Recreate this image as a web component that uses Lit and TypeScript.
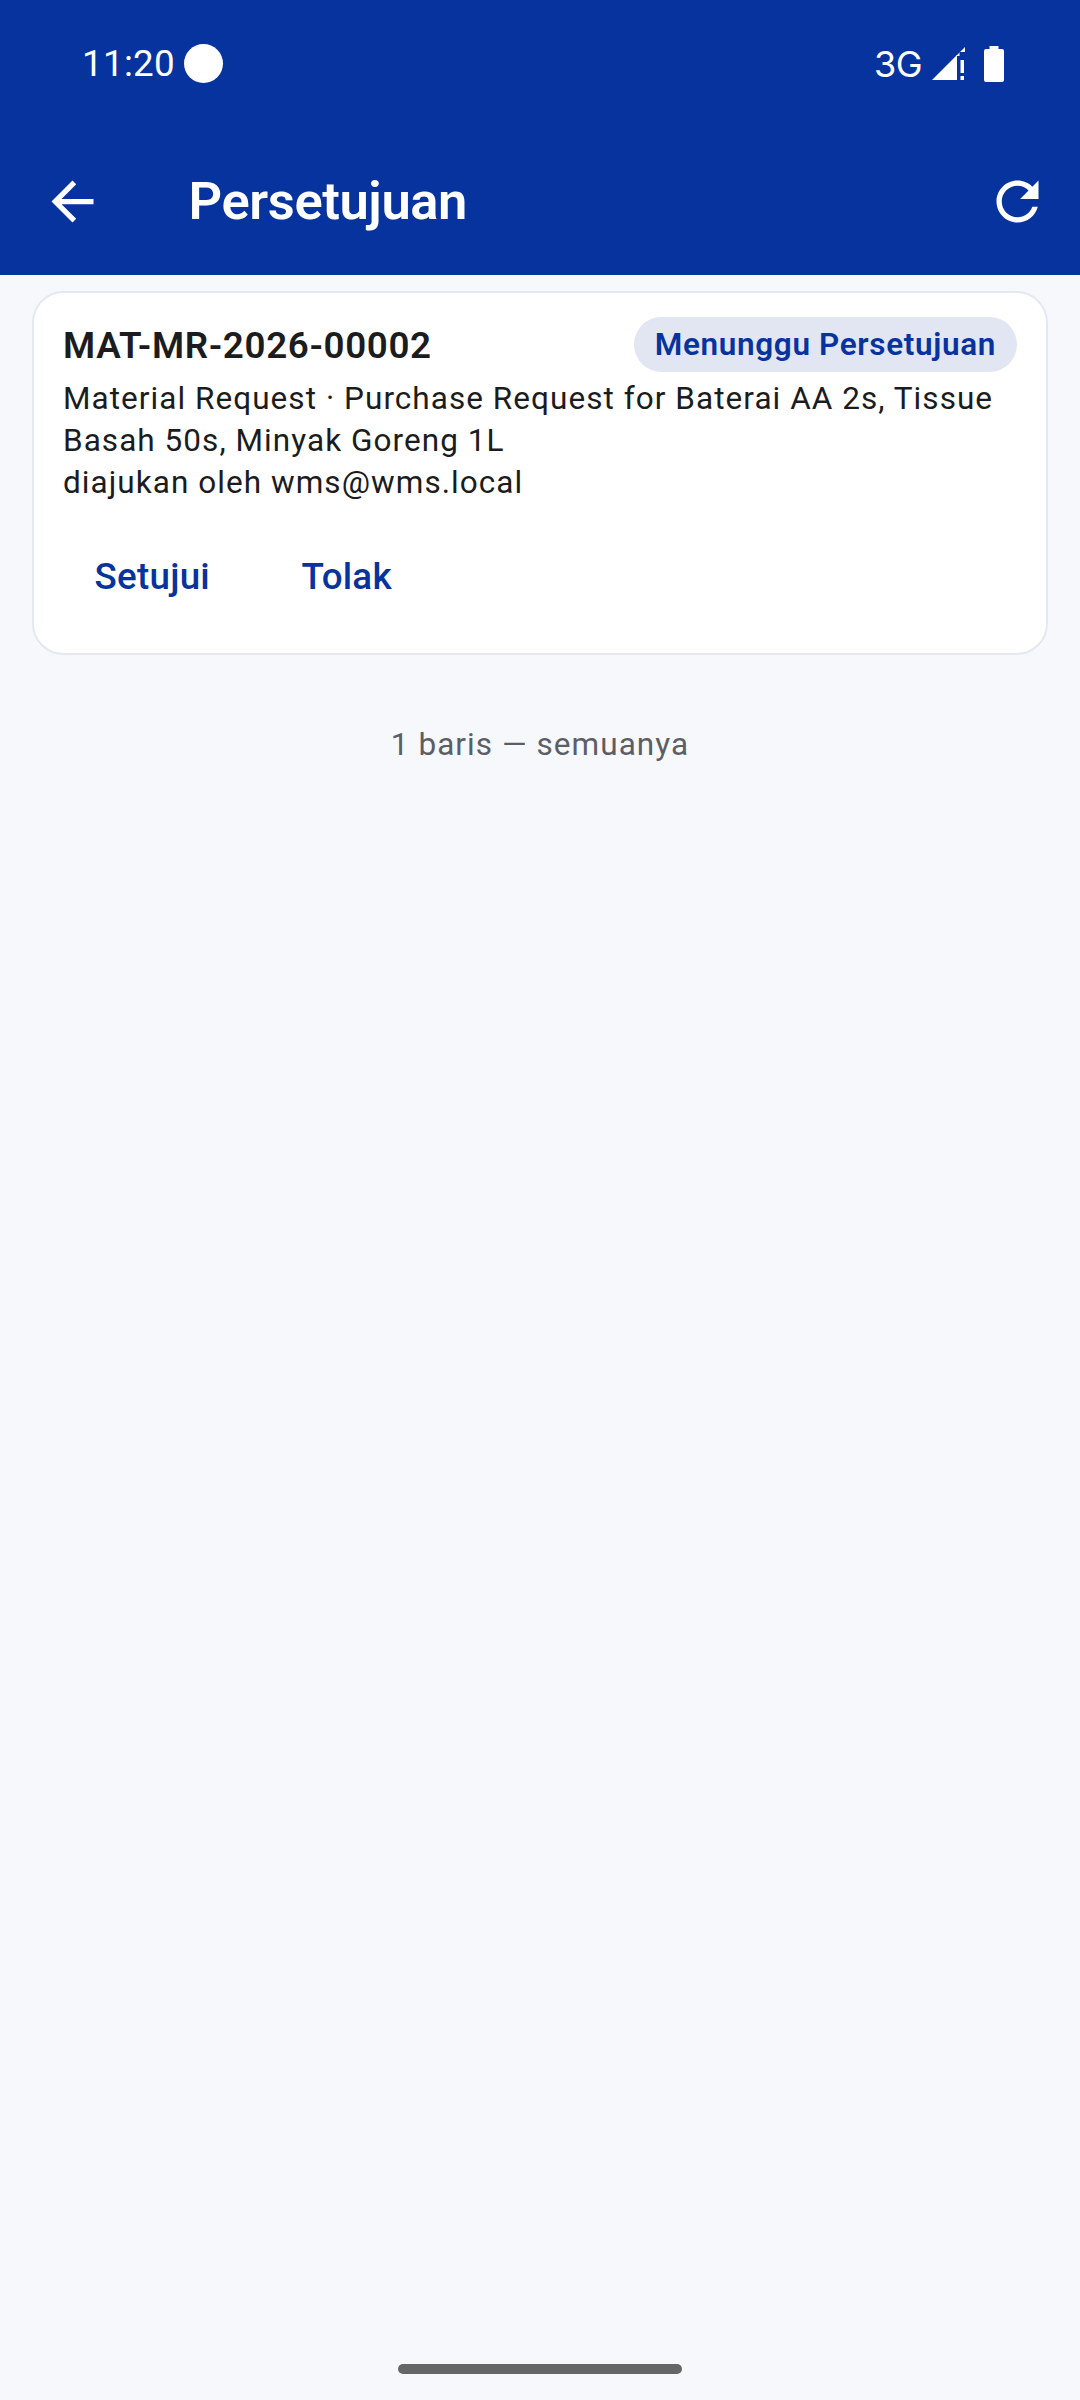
import { LitElement, html, css } from "lit";
import { customElement } from "lit/decorators.js";

@customElement("app-root")
export class AppRoot extends LitElement {
  static styles = css`
    :host {
      display: flex;
      flex-direction: column;
      width: 1080px;
      height: 2400px;
      background: #f7f8fc;
      font-family: Roboto, "Liberation Sans", sans-serif;
      color: #1a1c20;
      overflow: hidden;
    }
    .top { background: #07339f; color: #fff; height: 275px; display: flex; flex-direction: column; flex: none; }
    .status { height: 105px; display: flex; align-items: center; box-sizing: border-box; padding: 42px 74.6px 20px 82px; justify-content: space-between; flex: none; }
    .left, .right { display: flex; align-items: center; }
    .time { font-size: 36.75px; letter-spacing: 0.3px; line-height: 42px; }
    .dot { width: 39px; height: 39px; border-radius: 50%; background: #fff; margin-left: 9px; }
    .net { font-size: 36px; line-height: 42px; margin-right: 10px; font-family: Inter, Roboto, sans-serif; letter-spacing: -0.3px; }
    .sig { width: 33px; height: 33px; display: block; }
    .bat { width: 22px; height: 36px; display: block; margin-left: 18px; }
    .bar { flex: 1; display: flex; align-items: center; padding: 0 31.5px 0 40.5px; margin-top: 23px; }
    .icon { width: 63px; height: 63px; display: block; fill: #fff; flex: none; }
    .title { flex: 1; font-size: 52.5px; line-height: 73.5px; font-weight: 600; margin-left: 85px; letter-spacing: -0.4px; }
    .card {
      margin: 16px 32px 0;
      background: #fff;
      border: 2.6px solid #e3e8f2;
      border-radius: 31.5px;
      padding: 24px 29px 0;
      box-sizing: border-box;
      height: 364px;
    }
    .head { display: flex; align-items: center; justify-content: space-between; }
    .id { font-size: 36.75px; line-height: 52.5px; font-weight: 600; letter-spacing: 0.65px; margin-top: 3px; }
    .badge {
      background: #e1e6f2;
      color: #07339f;
      border-radius: 28px;
      padding: 6.5px 21px;
      font-size: 31.5px;
      line-height: 42px;
      font-weight: 600;
      letter-spacing: 0.65px;
    }
    .body { font-size: 31.5px; line-height: 42px; letter-spacing: 1.05px; margin-top: 5px; }
    .actions { display: flex; gap: 28.5px; margin-top: 26.5px; }
    .btn { color: #07339f; font-size: 36.75px; line-height: 52.5px; font-weight: 500; padding: 21px 31.5px; letter-spacing: 0.26px; }
    .foot { text-align: center; font-size: 31.5px; line-height: 42px; letter-spacing: 1.05px; color: #5c5e66; margin-top: 69px; }
    .spacer { flex: 1; }
    .home { width: 284px; height: 10px; border-radius: 5px; background: #666; margin: 0 auto 26px; flex: none; }
  `;

  render() {
    return html`
      <div class="top">
        <div class="status">
          <div class="left"><span class="time">11:20</span><span class="dot"></span></div>
          <div class="right">
            <span class="net">3G</span>
            <svg class="sig" viewBox="0 0 33 33" fill="#fff">
              <path d="M0 33 L25 8 V33 Z" />
              <path d="M24 9 L33 0 V5 H27.5 V9 Z" />
              <path d="M28.5 13 H32 V26 H28.5 Z M28.5 29 H32 V33 H28.5 Z" />
            </svg>
            <svg class="bat" viewBox="0 0 22 36" fill="#fff">
              <path d="M6.5 0 H15.5 V3 H19 Q21 3 21 5 V34 Q21 36 19 36 H3 Q1 36 1 34 V5 Q1 3 3 3 H6.5 Z" />
            </svg>
          </div>
        </div>
        <div class="bar">
          <svg class="icon" viewBox="0 0 24 24"><path d="M20 11H7.83l5.59-5.59L12 4l-8 8 8 8 1.41-1.41L7.83 13H20v-2z" /></svg>
          <div class="title">Persetujuan</div>
          <svg class="icon" viewBox="0 0 24 24"><path d="M17.65 6.35C16.2 4.9 14.21 4 12 4c-4.42 0-7.99 3.58-7.99 8s3.57 8 7.99 8c3.73 0 6.84-2.55 7.73-6h-2.08c-.82 2.33-3.04 4-5.65 4-3.31 0-6-2.69-6-6s2.69-6 6-6c1.66 0 3.14.69 4.22 1.78L13 11h7V4l-2.35 2.35z" /></svg>
        </div>
      </div>
      <div class="card">
        <div class="head">
          <span class="id">MAT-MR-2026-00002</span>
          <span class="badge">Menunggu Persetujuan</span>
        </div>
        <div class="body">Material Request · Purchase Request for Baterai AA 2s, Tissue Basah 50s, Minyak Goreng 1L<br />diajukan oleh wms@wms.local</div>
        <div class="actions">
          <span class="btn">Setujui</span>
          <span class="btn">Tolak</span>
        </div>
      </div>
      <div class="foot">1 baris — semuanya</div>
      <div class="spacer"></div>
      <div class="home"></div>
    `;
  }
}
